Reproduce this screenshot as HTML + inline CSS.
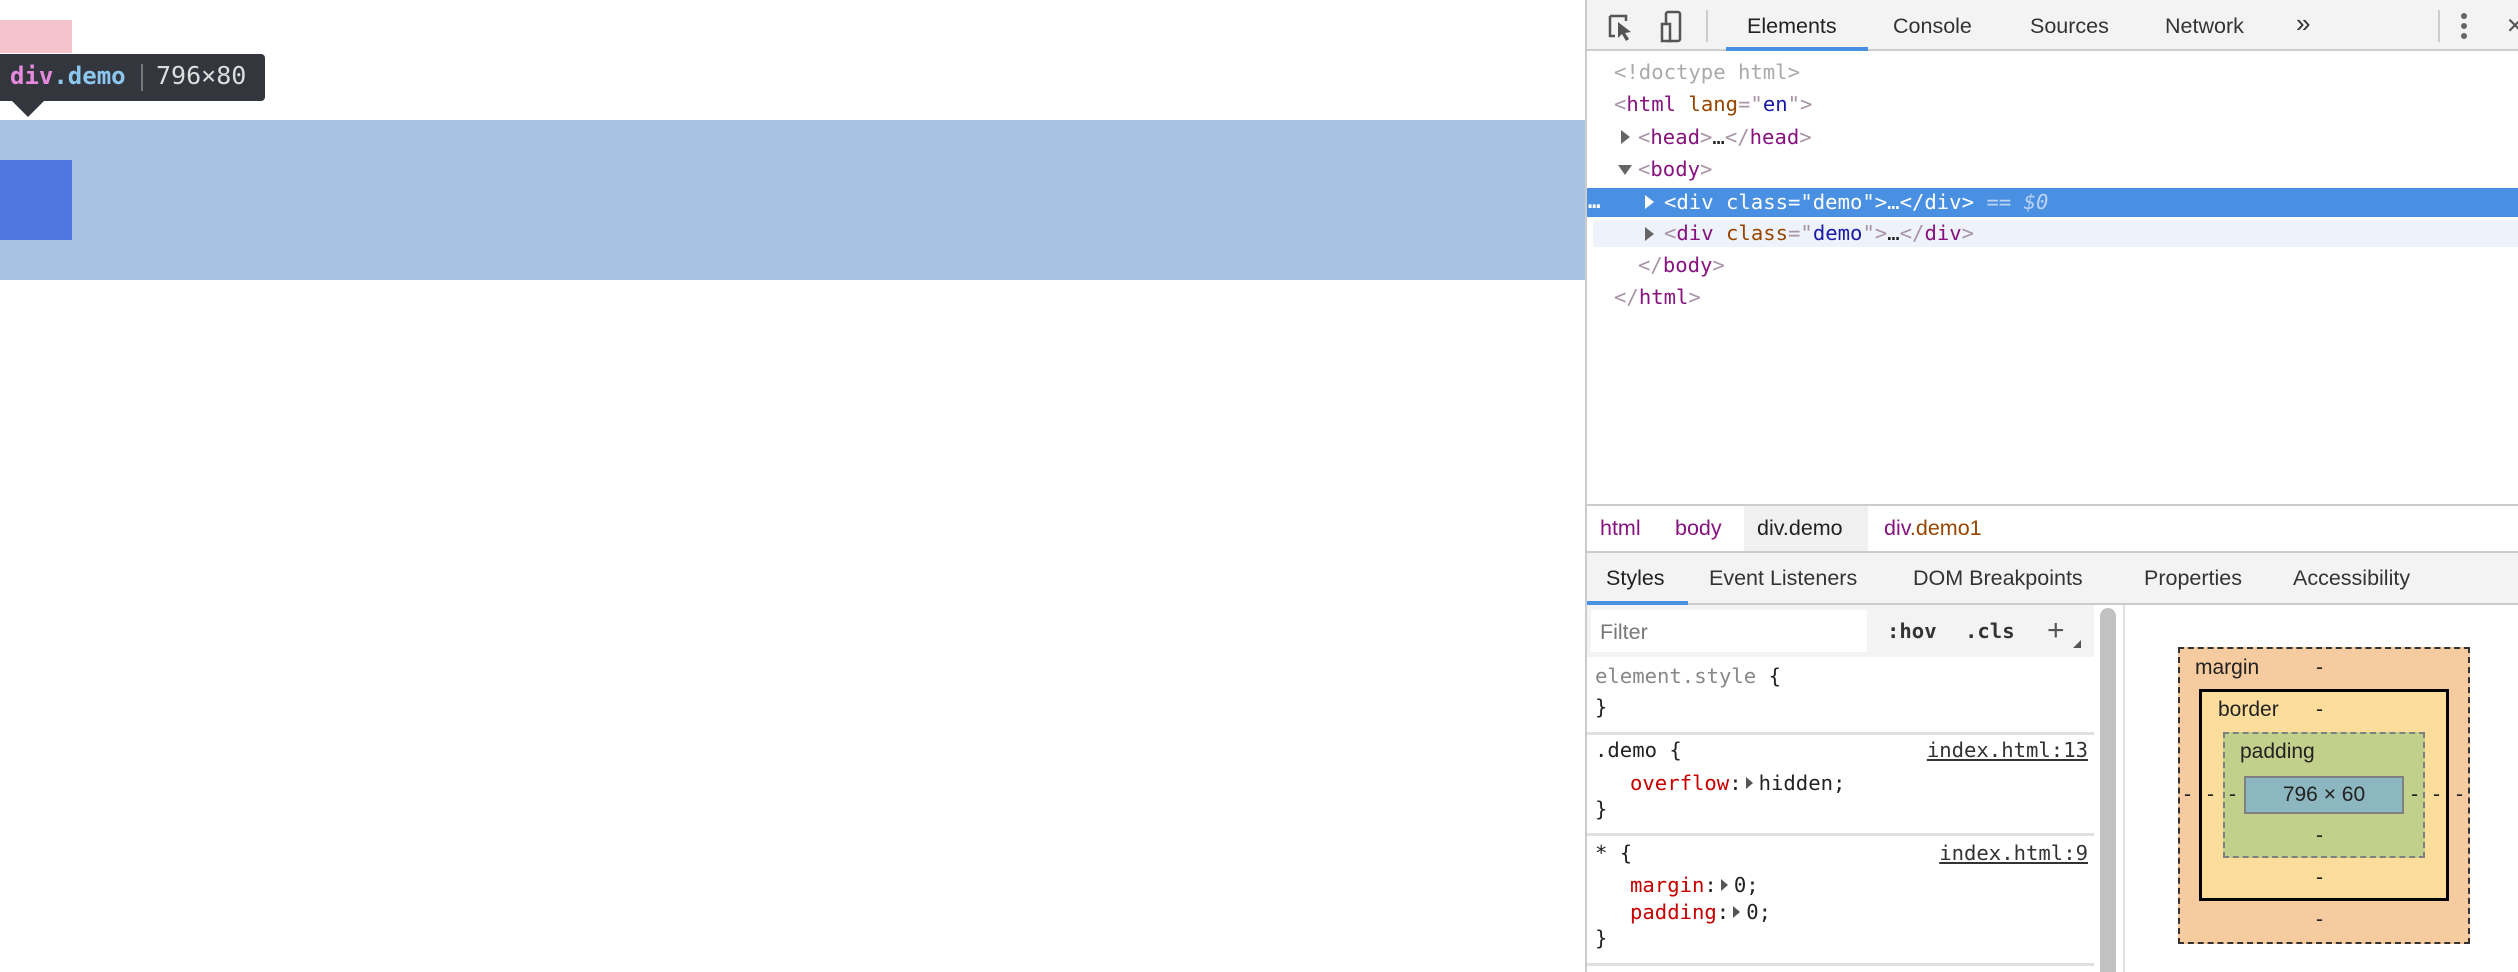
<!DOCTYPE html>
<html><head><style>
*{margin:0;padding:0;box-sizing:border-box}
body{width:2518px;height:972px;position:relative;overflow:hidden;background:#fff;font-family:"Liberation Sans",sans-serif}
.a{position:absolute;white-space:nowrap}
.m{font-family:"DejaVu Sans Mono","Liberation Mono",monospace;font-size:20.6px;line-height:26px;color:#222}
.s{font-size:21.5px;line-height:26px;color:#333}
.tag{color:#881280}.at{color:#994500}.av{color:#1a1aa6}.br{color:#a894a6}
.tri{position:absolute;width:0;height:0;border-top:7px solid transparent;border-bottom:7px solid transparent;border-left:9px solid #666}
.dn{position:absolute;width:0;height:0;border-left:7px solid transparent;border-right:7px solid transparent;border-top:10px solid #666}
.st{display:inline-block;width:0;height:0;border-top:6px solid transparent;border-bottom:6px solid transparent;border-left:7px solid #555;margin:0 6px 0 4px;vertical-align:1px}
.p{color:#c80000}
.bm{font-size:21px;color:#222;line-height:26px}
</style></head><body>
<div class="a" style="left:0;top:20px;width:72px;height:33px;background:#f4c3cc"></div>
<div class="a" style="left:0;top:54px;width:265px;height:47px;background:#33363d;border-radius:0 4px 4px 0"></div>
<div class="a m" style="left:10px;top:63px;font-size:24px;font-weight:bold;color:#e58ade">div<span style="color:#8bc7ee">.demo</span></div>
<div class="a" style="left:141px;top:64px;width:2px;height:27px;background:#777"></div>
<div class="a m" style="left:156px;top:63px;font-size:25px;color:#ddd">796×80</div>
<div class="a" style="left:12px;top:101px;width:0;height:0;border-left:16px solid transparent;border-right:16px solid transparent;border-top:16px solid #33363d"></div>
<div class="a" style="left:0;top:120px;width:1585px;height:160px;background:#a7c3e4"></div>
<div class="a" style="left:0;top:160px;width:72px;height:80px;background:#5077e0"></div>

<div class="a" style="left:1585px;top:0;width:933px;height:972px;border-left:2px solid #ccc;background:#fff"></div>
<div class="a" style="left:1587px;top:0;width:931px;height:51px;background:#f3f3f3;border-bottom:2px solid #ccc"></div>
<svg class="a" style="left:1604px;top:10px" width="100" height="34"><path d="M6 6v20h5M6 6h16v5" fill="none" stroke="#555" stroke-width="2.5"/><path d="M14 12l0 16 4-4 4 7 3-2-4-6 6-1z" fill="#555"/><rect x="62" y="2" width="14" height="29" rx="2" fill="none" stroke="#555" stroke-width="2.5"/><rect x="58" y="14" width="8" height="17" fill="#f3f3f3" stroke="#555" stroke-width="2.5"/></svg>
<div class="a" style="left:1706px;top:10px;width:2px;height:32px;background:#ccc"></div>
<div class="a s" style="left:1747px;top:13px;color:#222">Elements</div>
<div class="a" style="left:1726px;top:47px;width:142px;height:4px;background:#4a90e2"></div>
<div class="a s" style="left:1893px;top:13px">Console</div>
<div class="a s" style="left:2030px;top:13px">Sources</div>
<div class="a s" style="left:2165px;top:13px">Network</div>
<div class="a s" style="left:2296px;top:10px;font-size:26px">»</div>
<div class="a" style="left:2438px;top:10px;width:2px;height:32px;background:#ccc"></div>
<div class="a" style="left:2461px;top:13px;width:6px;height:6px;border-radius:3px;background:#666"></div>
<div class="a" style="left:2461px;top:23px;width:6px;height:6px;border-radius:3px;background:#666"></div>
<div class="a" style="left:2461px;top:33px;width:6px;height:6px;border-radius:3px;background:#666"></div>
<div class="a s" style="left:2506px;top:13px;color:#555">✕</div>

<div class="a m" style="left:1614px;top:59px;color:#aaa">&lt;!doctype html&gt;</div>
<div class="a m" style="left:1614px;top:91px"><span class="br">&lt;</span><span class="tag">html</span> <span class="at">lang</span><span class="br">="</span><span class="av">en</span><span class="br">"&gt;</span></div>
<div class="tri" style="left:1621px;top:130px"></div>
<div class="a m" style="left:1638px;top:124px"><span class="br">&lt;</span><span class="tag">head</span><span class="br">&gt;</span>…<span class="br">&lt;/</span><span class="tag">head</span><span class="br">&gt;</span></div>
<div class="dn" style="left:1618px;top:165px"></div>
<div class="a m" style="left:1638px;top:156px"><span class="br">&lt;</span><span class="tag">body</span><span class="br">&gt;</span></div>
<div class="a" style="left:1587px;top:188px;width:931px;height:29px;background:#4a90e2"></div>
<div class="a m" style="left:1588px;top:188px;color:#fff;font-weight:bold">…</div>
<div class="tri" style="left:1645px;top:195px;border-left-color:#fff"></div>
<div class="a m" style="left:1664px;top:189px;color:#fff">&lt;div class="demo"&gt;…&lt;/div&gt; <span style="color:#bcd4f4">== <i>$0</i></span></div>
<div class="a" style="left:1593px;top:220px;width:925px;height:27px;background:#eef3fb;border-radius:3px 0 0 3px"></div>
<div class="tri" style="left:1645px;top:227px"></div>
<div class="a m" style="left:1664px;top:220px"><span class="br">&lt;</span><span class="tag">div</span> <span class="at">class</span><span class="br">="</span><span class="av">demo</span><span class="br">"&gt;</span>…<span class="br">&lt;/</span><span class="tag">div</span><span class="br">&gt;</span></div>
<div class="a m" style="left:1638px;top:252px"><span class="br">&lt;/</span><span class="tag">body</span><span class="br">&gt;</span></div>
<div class="a m" style="left:1614px;top:284px"><span class="br">&lt;/</span><span class="tag">html</span><span class="br">&gt;</span></div>

<div class="a" style="left:1587px;top:504px;width:931px;height:2px;background:#ccc"></div>
<div class="a" style="left:1744px;top:506px;width:124px;height:45px;background:#f0f0f0"></div>
<div class="a s" style="left:1600px;top:515px;color:#881280">html</div>
<div class="a s" style="left:1675px;top:515px;color:#881280">body</div>
<div class="a s" style="left:1757px;top:515px;color:#222">div.demo</div>
<div class="a s" style="left:1884px;top:515px;color:#881280">div<span style="color:#994500">.demo1</span></div>
<div class="a" style="left:1587px;top:551px;width:931px;height:54px;background:#f3f3f3;border-top:2px solid #ccc;border-bottom:2px solid #ccc"></div>
<div class="a s" style="left:1606px;top:565px;color:#222">Styles</div>
<div class="a" style="left:1587px;top:601px;width:101px;height:4px;background:#4a90e2"></div>
<div class="a s" style="left:1709px;top:565px">Event Listeners</div>
<div class="a s" style="left:1913px;top:565px">DOM Breakpoints</div>
<div class="a s" style="left:2144px;top:565px">Properties</div>
<div class="a s" style="left:2293px;top:565px">Accessibility</div>

<div class="a" style="left:1587px;top:605px;width:507px;height:52px;background:#f3f3f3"></div>
<div class="a" style="left:1591px;top:610px;width:276px;height:42px;background:#fff"></div>
<div class="a s" style="left:1600px;top:619px;color:#777">Filter</div>
<div class="a m" style="left:1887px;top:618px;font-weight:bold;color:#333">:hov</div>
<div class="a m" style="left:1965px;top:618px;font-weight:bold;color:#333">.cls</div>
<div class="a" style="left:2047px;top:616px;font-size:30px;line-height:30px;color:#555">+</div>
<div class="a" style="left:2073px;top:640px;width:0;height:0;border-left:8px solid transparent;border-bottom:8px solid #555"></div>
<div class="a" style="left:2100px;top:608px;width:16px;height:364px;background:#c2c2c2;border-radius:8px 8px 0 0"></div>
<div class="a" style="left:2123px;top:605px;width:2px;height:367px;background:#e0e0e0"></div>

<div class="a m" style="left:1595px;top:663px;color:#888">element.style <span style="color:#222">{</span></div>
<div class="a m" style="left:1595px;top:694px">}</div>
<div class="a" style="left:1587px;top:732px;width:507px;height:3px;background:#e0e0e0"></div>
<div class="a m" style="left:1595px;top:737px">.demo {</div>
<div class="a m" style="left:1880px;top:737px;width:208px;text-align:right;color:#333;text-decoration:underline">index.html:13</div>
<div class="a m" style="left:1630px;top:770px"><span class="p">overflow</span>:<span class="st"></span>hidden;</div>
<div class="a m" style="left:1595px;top:796px">}</div>
<div class="a" style="left:1587px;top:833px;width:507px;height:3px;background:#e0e0e0"></div>
<div class="a m" style="left:1595px;top:840px">* {</div>
<div class="a m" style="left:1880px;top:840px;width:208px;text-align:right;color:#333;text-decoration:underline">index.html:9</div>
<div class="a m" style="left:1630px;top:872px"><span class="p">margin</span>:<span class="st"></span>0;</div>
<div class="a m" style="left:1630px;top:899px"><span class="p">padding</span>:<span class="st"></span>0;</div>
<div class="a m" style="left:1595px;top:925px">}</div>
<div class="a" style="left:1587px;top:963px;width:507px;height:3px;background:#e0e0e0"></div>

<div class="a" style="left:2178px;top:647px;width:292px;height:297px;background:#f6cb9f;border:2px dashed #333"></div>
<div class="a" style="left:2199px;top:689px;width:250px;height:212px;background:#fddd9b;border:3px solid #000"></div>
<div class="a" style="left:2223px;top:732px;width:202px;height:126px;background:#c3d08b;border:2px dashed #808080"></div>
<div class="a" style="left:2244px;top:776px;width:160px;height:38px;background:#8cb6c0;border:2px solid #808080"></div>
<div class="a bm" style="left:2195px;top:655px">margin</div>
<div class="a bm" style="left:2218px;top:697px">border</div>
<div class="a bm" style="left:2240px;top:739px">padding</div>
<div class="a bm" style="left:2244px;top:782px;width:160px;text-align:center">796 × 60</div>
<div class="a bm" style="left:2316px;top:655px">-</div>
<div class="a bm" style="left:2316px;top:697px">-</div>
<div class="a bm" style="left:2316px;top:823px">-</div>
<div class="a bm" style="left:2316px;top:865px">-</div>
<div class="a bm" style="left:2316px;top:907px">-</div>
<div class="a bm" style="left:2184px;top:782px">-</div>
<div class="a bm" style="left:2207px;top:782px">-</div>
<div class="a bm" style="left:2229px;top:782px">-</div>
<div class="a bm" style="left:2411px;top:782px">-</div>
<div class="a bm" style="left:2433px;top:782px">-</div>
<div class="a bm" style="left:2456px;top:782px">-</div>
</body></html>
